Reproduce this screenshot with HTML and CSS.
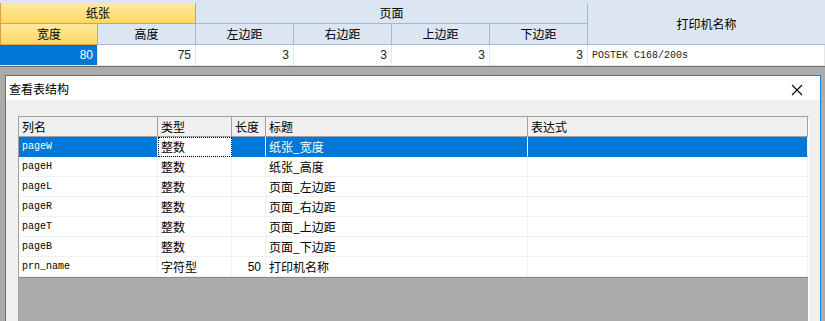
FILE: index.html
```html
<!DOCTYPE html>
<html lang="zh-CN">
<head>
    <meta charset="UTF-8">
    <title>查看表结构</title>
    <link rel="stylesheet" href="styles.css">
</head>
<body>
    <div class="top-strip"></div>
    <div class="sheet">
        <div class="hd gold span2">纸张</div>
        <div class="hd span4">页面</div>
        <div class="hd prn">打印机名称</div>
        <div class="hd gold">宽度</div>
        <div class="hd">高度</div>
        <div class="hd">左边距</div>
        <div class="hd">右边距</div>
        <div class="hd">上边距</div>
        <div class="hd">下边距</div>
        <div class="cell num sel">80</div>
        <div class="cell num">75</div>
        <div class="cell num">3</div>
        <div class="cell num">3</div>
        <div class="cell num">3</div>
        <div class="cell num">3</div>
        <div class="cell mono">POSTEK C168/200s</div>
    </div>
    <div class="sheet-end"></div>

    <div class="dialog">
        <div class="title-bar">
            <span class="title">查看表结构</span>
            <svg class="close" width="12" height="12" viewBox="0 0 12 12">
                <path d="M1 1 L11 11 M11 1 L1 11" stroke="#000" stroke-width="1.1" fill="none"/>
            </svg>
        </div>
        <div class="dialog-body">
            <div class="grid-box">
                <div class="grid">
                    <div class="gh">列名</div>
                    <div class="gh">类型</div>
                    <div class="gh">长度</div>
                    <div class="gh">标题</div>
                    <div class="gh last">表达式</div>

                    <div class="gc mono sel">pageW</div>
                    <div class="gc focus">整数</div>
                    <div class="gc num sel"></div>
                    <div class="gc sel">纸张_宽度</div>
                    <div class="gc sel"></div>

                    <div class="gc mono">pageH</div>
                    <div class="gc">整数</div>
                    <div class="gc num"></div>
                    <div class="gc">纸张_高度</div>
                    <div class="gc"></div>

                    <div class="gc mono">pageL</div>
                    <div class="gc">整数</div>
                    <div class="gc num"></div>
                    <div class="gc">页面_左边距</div>
                    <div class="gc"></div>

                    <div class="gc mono">pageR</div>
                    <div class="gc">整数</div>
                    <div class="gc num"></div>
                    <div class="gc">页面_右边距</div>
                    <div class="gc"></div>

                    <div class="gc mono">pageT</div>
                    <div class="gc">整数</div>
                    <div class="gc num"></div>
                    <div class="gc">页面_上边距</div>
                    <div class="gc"></div>

                    <div class="gc mono">pageB</div>
                    <div class="gc">整数</div>
                    <div class="gc num"></div>
                    <div class="gc">页面_下边距</div>
                    <div class="gc"></div>

                    <div class="gc mono">prn_name</div>
                    <div class="gc">字符型</div>
                    <div class="gc num">50</div>
                    <div class="gc">打印机名称</div>
                    <div class="gc"></div>
                </div>
                <div class="grid-empty"></div>
            </div>
        </div>
    </div>
</body>
</html>
```

FILE: styles.css
```css
* {
    box-sizing: border-box;
}
html, body {
    margin: 0;
    height: 321px;
    overflow: hidden;
}
body {
    background: #ababab;
    font-family: "Noto Sans CJK SC", sans-serif;
    font-size: 12px;
    color: #000;
}
.top-strip {
    height: 3px;
    background: #dce6f2;
}
.sheet {
    display: grid;
    grid-template-columns: repeat(6, 98px) 237px;
    grid-template-rows: 21px 21px 21px;
    background: #fff;
}
.hd {
    display: flex;
    align-items: center;
    justify-content: center;
    background: #dce6f2;
    border-right: 1px solid #a3b9d2;
    border-bottom: 1px solid #a3b9d2;
    line-height: 20px;
}
.hd.gold {
    background: linear-gradient(#ffeaa2, #ffd862);
    border-color: #dca33c;
}
.hd.gold:first-child,
.sheet .hd.gold:nth-child(4) {
    border-left: 1px solid #dca33c;
}
.span2 {
    grid-column: span 2;
}
.span4 {
    grid-column: span 4;
}
.prn {
    grid-row: span 2;
    border-right: none;
}
.cell {
    display: flex;
    align-items: center;
    padding: 0 4px;
    border-right: 1px solid #e6e6e6;
    border-bottom: 1px solid #e6e6e6;
    font-family: "Liberation Sans", sans-serif;
    font-size: 12px;
    color: #222;
}
.cell.num {
    justify-content: flex-end;
}
.cell.sel {
    background: #0078d7;
    color: #fff;
}
.mono {
    font-family: "Liberation Mono", monospace;
    font-size: 10px;
}
.sheet-end {
    height: 1px;
    background: #6e6e6e;
}
.dialog {
    margin: 8px 0 0 5px;
    width: 816px;
    height: 246px;
    overflow: hidden;
    border: 1px solid #1a83d6;
    border-bottom: none;
    background: #f0f0f0;
}
.title-bar {
    height: 24px;
    background: #fff;
    display: flex;
    align-items: center;
    justify-content: space-between;
    padding: 1px 17px 0 3px;
}
.title {
    font-size: 12px;
}
.close {
    display: block;
    margin-top: 2px;
}
.dialog-body {
    padding: 16px 12px 0 12px;
}
.grid-box {
    width: 791px;
    border: 1px solid;
    border-color: #a0a0a0 #fff #fff #a0a0a0;
    border-bottom: none;
    background: #ababab;
}
.grid {
    display: grid;
    grid-template-columns: 139px 74px 34px 262px 280px;
    grid-auto-rows: 20px;
    background: #fff;
    border-bottom: 1px solid #8a8a8a;
}
.gh {
    display: flex;
    align-items: center;
    padding: 0 3px;
    background: #f0f0f0;
    border-right: 1px solid #a0a0a0;
    border-bottom: 1px solid #a0a0a0;
}
.gc {
    display: flex;
    align-items: center;
    padding: 0 3px;
    border-right: 1px solid #f0f0f0;
    border-bottom: 1px solid #f0f0f0;
    white-space: nowrap;
}
.gc.num {
    justify-content: flex-end;
    padding-right: 4px;
    font-family: "Liberation Sans", sans-serif;
}
.gc.sel {
    background: #0078d7;
    color: #fff;
    border-color: #0078d7;
    border-right-color: #f0f0f0;
}
.gc.focus {
    outline: 1px dotted #000;
    outline-offset: -1px;
}
.grid-empty {
    height: 43px;
}
```
